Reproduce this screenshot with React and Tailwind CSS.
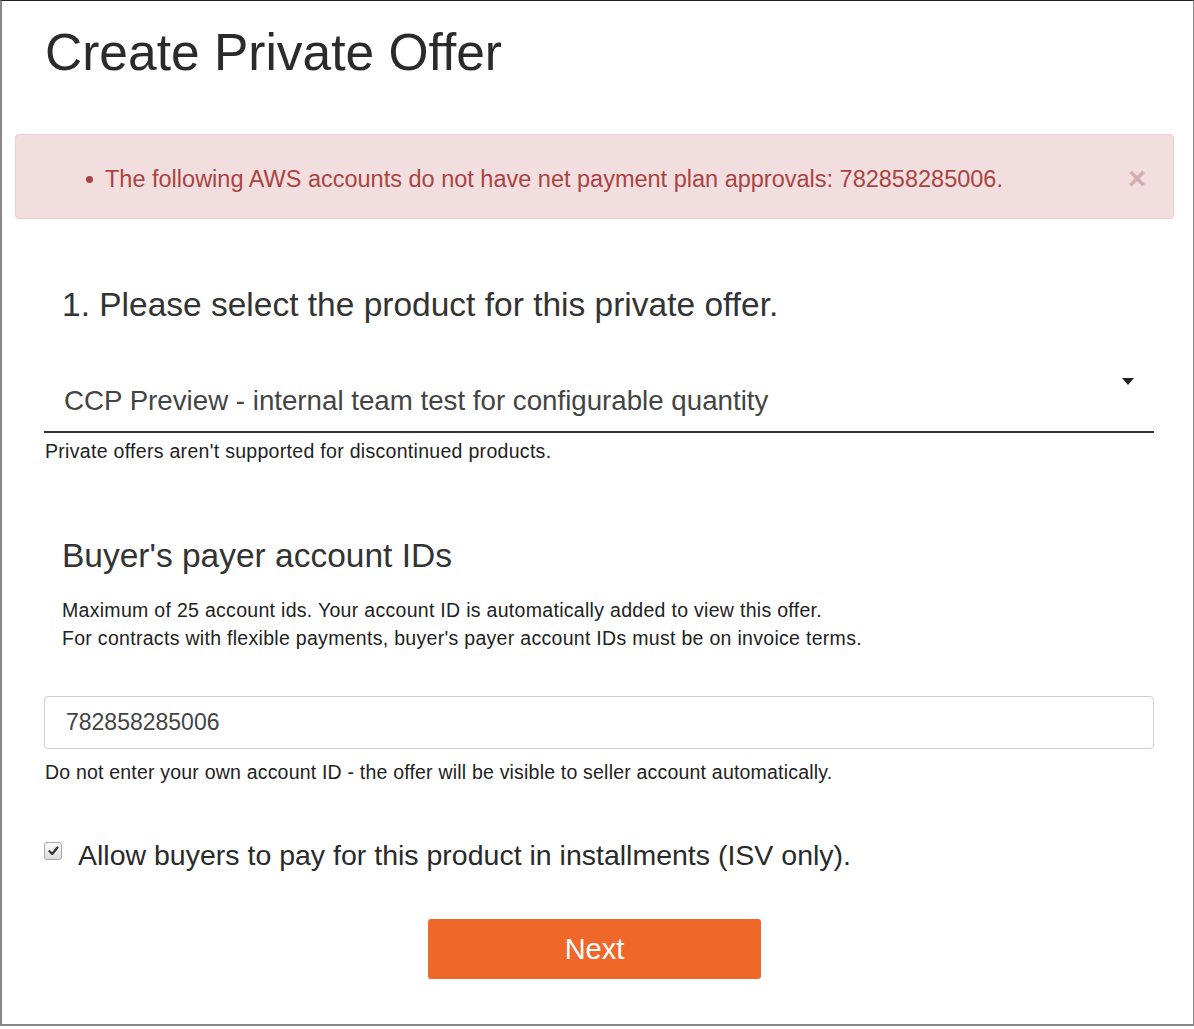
// App.jsx — "Create Private Offer" step one, with the payment-plan alert on top.

import { useState } from 'react'

function Caret() {
  return (
    <svg width="12" height="7" viewBox="0 0 12 7" className="block">
      <path d="M0 0 H12 L6 7 Z" fill="#222" />
    </svg>
  )
}

function Checkbox({ checked, onChange }) {
  return (
    <button
      type="button"
      onClick={() => onChange(!checked)}
      className="mt-[4px] flex h-[18px] w-[18px] shrink-0 items-center justify-center rounded-[3px] border border-[#a9a9a9] bg-gradient-to-b from-[#fdfdfd] to-[#dcdcdc]"
    >
      {checked && (
        <svg width="11" height="10" viewBox="0 0 11 10">
          <path d="M1.5 5.2 L4.2 8 L9.5 1.5" fill="none" stroke="#333" strokeWidth="2.2" strokeLinecap="round" strokeLinejoin="round" />
        </svg>
      )}
    </button>
  )
}

export default function App() {
  const [accounts, setAccounts] = useState('782858285006')
  const [installments, setInstallments] = useState(true)
  const [showAlert, setShowAlert] = useState(true)

  return (
    <div className="h-[1026px] w-[1194px] border-t border-l-2 border-r border-b-2 border-t-[#222] border-l-[#888] border-r-[#888] border-b-[#888] bg-white font-['Liberation_Sans',Arial,Helvetica,sans-serif] text-[#333]">
      <h1 className="ml-[43px] pt-[23px] text-[51.5px] leading-[56px] text-[#2b2b2b]">Create Private Offer</h1>

      {showAlert ? (
        <div className="ml-[13px] mr-[19px] mt-[54px] flex h-[85px] items-start rounded-[4px] border border-[#ebccd1] bg-[#f2dede] pt-[30px] text-[#a94442]">
          <span className="ml-[70px] mt-[11px] h-[7px] w-[7px] shrink-0 rounded-full bg-[#a94442]" />
          <span className="ml-[12px] flex-1 text-[23.5px] leading-[28px]">
            The following AWS accounts do not have net payment plan approvals: 782858285006.
          </span>
          <button
            type="button"
            onClick={() => setShowAlert(false)}
            className="mr-[27px] mt-0 text-[31px] font-bold leading-[28px] text-[#d2aeaf]"
          >
            ×
          </button>
        </div>
      ) : (
        <div className="mt-[54px] h-[85px]" />
      )}

      <div className="pl-[42px] pr-[39px]">
        <h2 className="ml-[18px] mt-[66px] text-[33.5px] leading-[40px]">1. Please select the product for this private offer.</h2>

        <div className="relative mt-[59px] border-b-2 border-[#333] pb-[13px]">
          <div className="pl-[20px] text-[27.7px] font-light leading-[34px] text-[#444]">
            CCP Preview - internal team test for configurable quantity
          </div>
          <div className="absolute right-[20px] top-[-6px]">
            <Caret />
          </div>
        </div>
        <p className="ml-[1px] mt-[6px] text-[19.5px] leading-[24px] tracking-[0.3px] text-[#222]">
          Private offers aren't supported for discontinued products.
        </p>

        <h2 className="ml-[18px] mt-[73px] text-[33.5px] leading-[40px]">Buyer's payer account IDs</h2>
        <div className="ml-[18px] mt-[20px] text-[19.5px] leading-[28px] tracking-[0.3px] text-[#222]">
          <p>Maximum of 25 account ids. Your account ID is automatically added to view this offer.</p>
          <p>For contracts with flexible payments, buyer's payer account IDs must be on invoice terms.</p>
        </div>

        <input
          value={accounts}
          onChange={(e) => setAccounts(e.target.value)}
          className="mt-[44px] block h-[53px] w-full rounded-[4px] border border-[#cfcfcf] px-[21px] text-[23px] text-[#444] outline-none"
        />
        <p className="ml-[1px] mt-[11px] text-[19.5px] leading-[24px] tracking-[0.2px] text-[#222]">
          Do not enter your own account ID - the offer will be visible to seller account automatically.
        </p>

        <label className="mt-[54px] flex items-start gap-[16px]">
          <Checkbox checked={installments} onChange={setInstallments} />
          <span className="text-[28.5px] leading-[34px] text-[#2a2a2a]">
            Allow buyers to pay for this product in installments (ISV only).
          </span>
        </label>

        <button
          type="button"
          className="ml-[384px] mt-[47px] block h-[60px] w-[333px] rounded-[3px] bg-[#ef682a] text-[29px] leading-[60px] text-white"
        >
          Next
        </button>
      </div>
    </div>
  )
}
